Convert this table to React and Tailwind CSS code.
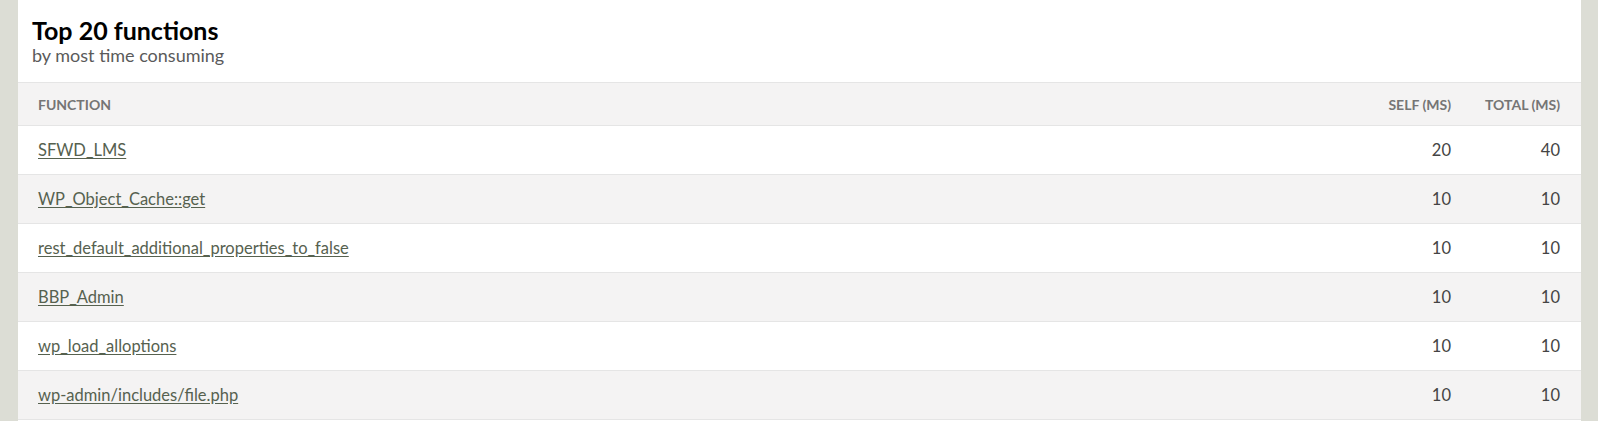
import React from "react";

const rows = [
  { name: "SFWD_LMS", self: 20, total: 40 },
  { name: "WP_Object_Cache::get", self: 10, total: 10 },
  { name: "rest_default_additional_properties_to_false", self: 10, total: 10 },
  { name: "BBP_Admin", self: 10, total: 10 },
  { name: "wp_load_alloptions", self: 10, total: 10 },
  { name: "wp-admin/includes/file.php", self: 10, total: 10 },
];

const TopFunctions = () => {
  return (
    <div className="min-h-screen bg-[#dcddd5] px-[18px] pr-[17px] font-['Lato',sans-serif]">
      <div className="bg-white pb-10">
        {/* Header */}
        <div className="px-[14px] pt-[17px] pb-[16px]">
          <h2 className="text-[25px] leading-[27px] font-bold text-black">Top 20 functions</h2>
          <p className="text-[18px] leading-[22px] text-[#5a5a5a]">by most time consuming</p>
        </div>

        {/* Table */}
        <table className="w-full border-collapse">
          <thead>
            <tr className="bg-[#f4f3f3] border-y border-[#e5e5e5]">
              <th className="h-[43px] pl-5 text-left text-[14px] font-bold uppercase text-[#757575]">Function</th>
              <th className="w-[120px] pr-[21px] text-right text-[14px] font-bold uppercase text-[#757575]">Self (ms)</th>
              <th className="w-[109px] pr-[21px] text-right text-[14px] font-bold uppercase text-[#757575]">Total (ms)</th>
            </tr>
          </thead>
          <tbody>
            {rows.map((row, i) => (
              <tr
                key={row.name}
                className={`border-b border-[#e5e5e5] ${i % 2 === 1 ? "bg-[#f4f3f3]" : "bg-white"}`}
              >
                <td className="h-[49px] pl-5 text-[16.5px] text-[#56614f]">
                  <a href="#" className="underline underline-offset-2">{row.name}</a>
                </td>
                <td className="pr-[21px] text-right text-[16.5px] text-[#444]">{row.self}</td>
                <td className="pr-[21px] text-right text-[16.5px] text-[#444]">{row.total}</td>
              </tr>
            ))}
          </tbody>
        </table>
      </div>
    </div>
  );
};

export default function App() {
  return <TopFunctions />;
}
